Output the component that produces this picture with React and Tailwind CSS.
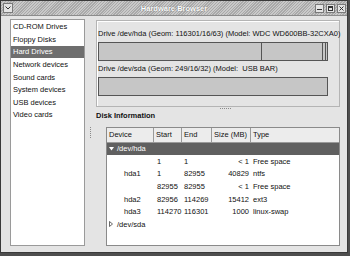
import React from 'react';

const DEVICES = [
  'CD-ROM Drives', 'Floppy Disks', 'Hard Drives', 'Network devices',
  'Sound cards', 'System devices', 'USB devices', 'Video cards',
];

const PARTS = [
  { dev: '', start: '1', end: '1', size: '< 1', type: 'Free space' },
  { dev: 'hda1', start: '1', end: '82955', size: '40829', type: 'ntfs' },
  { dev: '', start: '82955', end: '82955', size: '< 1', type: 'Free space' },
  { dev: 'hda2', start: '82956', end: '114269', size: '15412', type: 'ext3' },
  { dev: 'hda3', start: '114270', end: '116301', size: '1000', type: 'linux-swap' },
];

function TitleBar() {
  return (
    <div className="relative h-[15px] shrink-0 border-b border-[#8c8c8c] bg-[repeating-linear-gradient(135deg,#c9c9c9_0px,#c9c9c9_1px,#a9a9a9_1px,#a9a9a9_2px)]">
      <div className="absolute left-[2px] top-[2px] w-[10px] h-[10px] bg-[#e4e4e4] border border-[#7a7a7a] flex items-center justify-center">
        <svg width="6" height="4" viewBox="0 0 6 4">
          <path d="M0.5 0.5 L3 3 L5.5 0.5" fill="none" stroke="#333" strokeWidth="1" />
        </svg>
      </div>
      <div className="h-full flex items-center justify-center text-white text-[7.5px] font-bold [text-shadow:0_0_1px_#555]">
        Hardware Browser
      </div>
      <div className="absolute right-[1px] top-[3px] flex gap-[2px]">
        <div className="w-[9px] h-[9px] bg-[#e4e4e4] border border-[#7a7a7a] flex items-end justify-center pb-[2px]">
          <div className="w-[5px] h-[1px] bg-[#333]" />
        </div>
        <div className="w-[9px] h-[9px] bg-[#e4e4e4] border border-[#7a7a7a] flex items-center justify-center">
          <div className="w-[5px] h-[5px] border border-[#333] border-t-2" />
        </div>
        <div className="w-[9px] h-[9px] bg-[#e4e4e4] border border-[#7a7a7a] flex items-center justify-center">
          <svg width="5" height="5" viewBox="0 0 5 5">
            <path d="M0.5 0.5 L4.5 4.5 M4.5 0.5 L0.5 4.5" stroke="#333" strokeWidth="1" />
          </svg>
        </div>
      </div>
    </div>
  );
}

function DiskBar({ segments }) {
  return (
    <div className="w-[230px] h-[19px] border border-[#555] bg-[#c6c6c6] flex">
      {segments.map((w, i) => (
        <div key={i} className="h-full border-r border-[#555]" style={{ width: w }} />
      ))}
    </div>
  );
}

function Dots({ vertical }) {
  return (
    <div className={vertical ? 'flex flex-col gap-[1px]' : 'flex gap-[1px]'}>
      {Array.from({ length: 6 }).map((_, i) => (
        <div key={i} className="w-[1px] h-[1px] bg-[#8a8a8a]" />
      ))}
    </div>
  );
}

export default function App() {
  return (
    <div className="w-[350px] h-[256px] bg-[#4e4e4e] overflow-hidden [font-family:'Liberation_Sans',Arial,sans-serif] text-[7.5px] leading-[9px] text-[#111]">
      <div className="w-[348px] h-[253px] border border-[#3a3a3a] bg-[#e4e4e4] flex flex-col">
        <TitleBar />

        <div className="flex-1 flex pl-[9px] pt-[3px] pb-[6px]">
          {/* device categories */}
          <div className="w-[75px] bg-white border border-[#9a9a9a] pt-[0.5px]">
            {DEVICES.map((d, i) => (
              <div
                key={d}
                className={
                  'h-[12.6px] flex items-center pl-[2px] ' +
                  (i === 2 ? 'bg-[#6e6e6e] text-white' : '')
                }
              >
                {d}
              </div>
            ))}
          </div>

          <div className="w-[11px] flex items-center justify-center">
            <Dots vertical />
          </div>

          <div className="w-[244px] flex flex-col">
            {/* drives frame */}
            <div className="mt-[1px] h-[87px] border border-[#b4b4b4] shadow-[inset_1px_1px_0_#fff] pl-[1px] pt-[8px]">
              <div className="whitespace-nowrap">
                Drive /dev/hda (Geom: 116301/16/63) (Model: WDC WD600BB-32CXA0)
              </div>
              <div className="mt-[4px]">
                <DiskBar segments={[163, 61, 3]} />
              </div>
              <div className="mt-[2.5px] whitespace-nowrap">
                Drive /dev/sda (Geom: 249/16/32) (Model:&nbsp; USB BAR)
              </div>
              <div className="mt-[4px]">
                <DiskBar segments={[]} />
              </div>
            </div>

            <div className="h-[3px] flex items-center justify-center pl-[14px]">
              <Dots />
            </div>

            <div className="font-bold mt-[1px]">Disk Information</div>

            {/* partition table */}
            <div className="mt-[6.5px] ml-[10px] flex-1 bg-white border border-[#8a8a8a]">
              <div className="h-[15px] flex bg-[#ececec] border-b border-[#9a9a9a]">
                <div className="w-[47px] border-r border-[#9a9a9a] flex items-center pl-[2px]">Device</div>
                <div className="w-[28px] border-r border-[#9a9a9a] flex items-center pl-[2px]">Start</div>
                <div className="w-[30px] border-r border-[#9a9a9a] flex items-center pl-[2px]">End</div>
                <div className="w-[39px] border-r border-[#9a9a9a] flex items-center pl-[2px]">Size (MB)</div>
                <div className="flex-1 flex items-center pl-[2px]">Type</div>
              </div>

              <div className="h-[12.6px] flex items-center bg-[#606060] text-white">
                <svg width="5" height="4" viewBox="0 0 5 4" className="ml-[2px] mr-[3px]">
                  <path d="M0 0 L5 0 L2.5 3.5 Z" fill="#fff" />
                </svg>
                /dev/hda
              </div>

              {PARTS.map((p, i) => (
                <div key={i} className="h-[12.6px] flex items-center">
                  <div className="w-[47px] pl-[17px]">{p.dev}</div>
                  <div className="w-[28px] pl-[3px]">{p.start}</div>
                  <div className="w-[30px] pl-[2px]">{p.end}</div>
                  <div className="w-[39px] pr-[2px] text-right">{p.size}</div>
                  <div className="flex-1 pl-[2px]">{p.type}</div>
                </div>
              ))}

              <div className="h-[12.6px] flex items-center">
                <svg width="4" height="6" viewBox="0 0 4 6" className="ml-[2px] mr-[4px]">
                  <path d="M0.5 0.5 L3.5 3 L0.5 5.5 Z" fill="none" stroke="#444" strokeWidth="0.8" />
                </svg>
                /dev/sda
              </div>
            </div>
          </div>
        </div>
      </div>
    </div>
  );
}
